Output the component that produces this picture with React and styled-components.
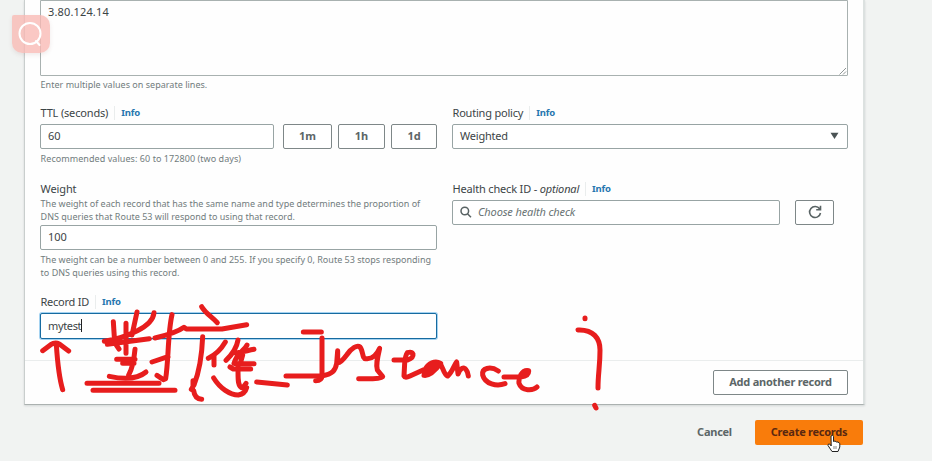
import React from "react";
import styled, { createGlobalStyle } from "styled-components";

const GlobalStyle = createGlobalStyle`
  * { box-sizing: border-box; }
  body {
    margin: 0;
    background: #f1f3f2;
    font-family: "Noto Sans", "Open Sans", sans-serif;
    color: #3c4446;
    overflow: hidden;
  }
`;

const Page = styled.div`
  position: relative;
  width: 932px;
  height: 461px;
  padding-left: 24px;
  overflow: hidden;
`;

const Panel = styled.section`
  width: 841px;
  height: 405px;
  background: #fefefe;
  border: 1px solid #c9cecd;
  border-top: 0;
  border-right: 2px solid #dce1e0;
  border-bottom-color: #abb1b0;
  box-shadow: 0 1px 2px rgba(0, 28, 36, 0.12);
  display: flex;
  flex-direction: column;
`;

const Body = styled.div`
  height: 360px;
  padding-left: 15px;
`;

const Footer = styled.div`
  flex: 1;
  border-top: 1px solid #eaeded;
  padding: 9px 15px 0 0;
  display: flex;
  justify-content: flex-end;
`;

const TextArea = styled.div`
  position: relative;
  width: 808px;
  height: 76px;
  border: 1px solid #a8b1b0;
  border-radius: 0 0 1px 1px;
  padding: 2px 7px;
  font-size: 11px;
  line-height: 18px;
`;

const Grip = styled.svg`
  position: absolute;
  right: 0;
  bottom: 0;
`;

const Columns = styled.div`
  display: grid;
  grid-template-columns: 397px 396px;
  column-gap: 15px;
`;

const Group = styled.div`
  height: ${(p) => p.$h}px;
`;

const Spacer = styled.div`
  height: ${(p) => p.$h}px;
`;

const Text = styled.span`
  letter-spacing: ${(p) => p.$ls || 0}px;
  white-space: nowrap;
`;

const LabelRow = styled.div`
  display: flex;
  align-items: center;
  height: 16px;
  padding-left: 0.5px;
  font-size: 11px;
  line-height: 16px;
`;

const Info = styled.a`
  margin-left: 6px;
  padding-left: 6px;
  border-left: 1px solid #eaeded;
  font-size: 9.5px;
  font-weight: 700;
  line-height: 14px;
  letter-spacing: -0.2px;
  color: #2676ae;
`;

const Hint = styled.div`
  height: ${(p) => p.$h || 13}px;
  padding-left: 0.6px;
  font-size: 9px;
  line-height: 13px;
  color: #717c7d;
`;

const Field = styled.div`
  display: flex;
  align-items: center;
  width: ${(p) => p.$w}px;
  height: ${(p) => (p.$focus ? 26 : 25)}px;
  padding: 0 7px 1px;
  border: 1px solid ${(p) => (p.$focus ? "#176ba0" : "#98a4a4")};
  border-radius: 2px;
  box-shadow: ${(p) => (p.$focus ? "0 0 0 1px #a5d3f1" : "none")};
  background: #fff;
  font-size: 11px;
  line-height: 16px;
`;

const Caret = styled.i`
  width: 1px;
  height: 13px;
  background: #222;
`;

const Placeholder = styled(Text)`
  margin-left: 6px;
  font-style: italic;
  color: #687374;
`;

const Arrow = styled.svg`
  margin-left: auto;
  margin-right: 1px;
`;

const Row = styled.div`
  display: flex;
  gap: ${(p) => p.$gap}px;
`;

const ButtonSet = styled.div`
  display: flex;
  gap: 6px;
  margin-left: 3px;
`;

const Button = styled.button`
  display: flex;
  align-items: center;
  justify-content: center;
  width: ${(p) => p.$w}px;
  height: 25px;
  padding: 0 0 1px;
  font: 700 11px/16px "Noto Sans", sans-serif;
  border: 1px solid ${(p) => (p.$kind ? "transparent" : "#7e8788")};
  border-radius: 2px;
  color: ${(p) => (p.$kind === "primary" ? "#5a2810" : "#5c6667")};
  background: ${(p) =>
    p.$kind === "primary" ? "#f97c0b" : p.$kind === "link" ? "transparent" : "#fff"};
`;

const Actions = styled.div`
  display: flex;
  justify-content: flex-end;
  gap: 5px;
  width: 839px;
  margin-top: 15px;
`;

const SearchBadge = styled.div`
  position: absolute;
  left: 12px;
  top: 15px;
  width: 38px;
  height: 38px;
  border-radius: 2px 10px 10px 10px;
  background: rgba(249, 184, 180, 0.78);
  box-shadow: 0 2px 4px rgba(120, 60, 60, 0.1);
`;

const Ink = styled.svg`
  position: absolute;
  left: 0;
  top: 300px;
  pointer-events: none;
`;

const Pointer = styled.svg`
  position: absolute;
  left: 827px;
  top: 434px;
`;

const Handwriting = () => (
  <Ink width="640" height="120" viewBox="0 0 1920 360" fill="none" stroke="#e71d1d" strokeWidth="15" strokeLinecap="round" strokeLinejoin="round">
    <g transform="translate(60 0)">
      <path d="M68 152L92 134Q105 126 118 132L146 153M109 134C112 180 116 230 128 269" />
      <path d="M280 65L284 128L297 147M318 70V160M351 36L336 105M402 38C400 58 380 78 352 92C330 103 290 118 253 124M262 133L388 116" />
      <path d="M290 178H345M345 148C342 180 338 205 326 225M308 190H342M268 229C310 238 352 238 378 216" />
      <path d="M405 114C440 106 470 98 492 82L499 87H606L680 74M456 44C443 100 446 180 437 236L430 239L411 226M396 186L444 170" />
      <path d="M201 250H417M219 271H465" />
      <path d="M545 20C555 38 575 50 592 68M548 110C546 160 540 210 522 255M519 242L519 260L514 268L521 272C523 288 532 297 545 298" />
      <path d="M616 126C605 145 585 165 565 175M582 165V195M654 120C650 145 635 165 618 181M681 135C675 150 650 160 642 190M645 158C665 158 680 152 702 148M650 191H702M630 201L640 207H692M668 165L661 190M654 198C655 225 650 262 668 264L678 250" />
      <path d="M581 234C600 265 630 285 655 285Q675 282 680 263" />
    </g>
    <g transform="translate(540 0)">
      <path d="M230 246L322 255M370 96H424M426 114V225Q426 242 407 242" />
      <path d="M318 228H425C458 222 466 212 470 190L473 152V188Q480 192 500 165C515 143 532 134 540 141C550 152 546 178 558 176C575 178 590 165 599 145C592 175 587 195 592 210L608 230Q600 238 536 236" />
    </g>
    <g transform="translate(1140 0)">
      <path d="M42 180H82Q101 174 99 162Q95 154 82 158Q76 166 74 190L72 228Q75 235 90 228L136 207C145 190 165 180 182 190C165 213 145 228 132 226C135 206 160 196 178 188C190 200 190 224 203 228C218 215 222 195 230 186L234 222C240 206 252 198 258 209Q264 216 265 228" />
      <path d="M355 213C330 197 305 205 308 225C315 252 350 260 375 251" />
      <path d="M372 231H422Q447 228 446 212C425 208 415 235 417 250C425 275 460 272 471 261" />
      <path d="M615 54V56M594 90C640 88 660 115 660 150C660 200 654 220 654 264M644 316L648 324" />
    </g>
  </Ink>
);

export default function App() {
  return (
    <Page>
      <GlobalStyle />
      <Panel>
        <Body>
          <TextArea>
            <Text $ls={0.15}>3.80.124.14</Text>
            <Grip width="8" height="8" viewBox="0 0 8 8" stroke="#909696">
              <path d="M0.5 7.5L7 1M4 7.5L7 4.5" />
            </Grip>
          </TextArea>
          <Spacer $h={2} />
          <Hint $h={27}><Text $ls={0.02}>Enter multiple values on separate lines.</Text></Hint>
          <Columns>
            <Group $h={76}>
              <LabelRow><Text $ls={-0.17}>TTL (seconds)</Text><Info>Info</Info></LabelRow>
              <Spacer $h={3} />
              <Row $gap={6}>
                <Field $w={234}><Text>60</Text></Field>
                <ButtonSet>
                  <Button $w={49}>1m</Button>
                  <Button $w={47}>1h</Button>
                  <Button $w={46}>1d</Button>
                </ButtonSet>
              </Row>
              <Spacer $h={3} />
              <Hint><Text $ls={0.06}>Recommended values: 60 to 172800 (two days)</Text></Hint>
            </Group>
            <Group $h={76}>
              <LabelRow><Text $ls={-0.2}>Routing policy</Text><Info>Info</Info></LabelRow>
              <Spacer $h={3} />
              <Field $w={396}>
                <Text $ls={-0.22}>Weighted</Text>
                <Arrow width="9" height="8" viewBox="0 0 9 8"><path d="M0.5 0.8H8.5L4.5 7Z" fill="#4a5354" /></Arrow>
              </Field>
            </Group>
            <Group $h={113}>
              <LabelRow><Text $ls={-0.1}>Weight</Text></LabelRow>
              <Hint><Text>The weight of each record that has the same name and type determines the proportion of</Text></Hint>
              <Hint $h={15}><Text $ls={0.01}>DNS queries that Route 53 will respond to using that record.</Text></Hint>
              <Field $w={397}><Text>100</Text></Field>
              <Spacer $h={3} />
              <Hint><Text $ls={0.01}>The weight can be a number between 0 and 255. If you specify 0, Route 53 stops responding</Text></Hint>
              <Hint><Text>to DNS queries using this record.</Text></Hint>
            </Group>
            <Group $h={113}>
              <LabelRow><Text $ls={-0.17}>Health check ID - <em>optional</em></Text><Info>Info</Info></LabelRow>
              <Spacer $h={3} />
              <Row $gap={15}>
                <Field $w={328}>
                  <svg width="12" height="12" viewBox="0 0 12 12" fill="none" stroke="#596364" strokeWidth="1.5"><circle cx="4.8" cy="5" r="3.8" /><path d="M7.5 7.7L11 11.2" /></svg>
                  <Placeholder $ls={-0.12}>Choose health check</Placeholder>
                </Field>
                <Button $w={39} aria-label="Refresh">
                  <svg width="14" height="14" viewBox="0 0 14 14" fill="none" stroke="#596364" strokeWidth="1.6"><path d="M11.6 3.8A5.5 5.5 0 1 0 12.5 8M12.5 .8V4.8H8.2" /></svg>
                </Button>
              </Row>
            </Group>
          </Columns>
          <LabelRow><Text $ls={-0.25}>Record ID</Text><Info>Info</Info></LabelRow>
          <Spacer $h={3} />
          <Field $w={397} $focus><Text $ls={-0.35}>mytest</Text><Caret /></Field>
        </Body>
        <Footer><Button $w={135}><Text $ls={-0.23}>Add another record</Text></Button></Footer>
      </Panel>
      <Actions>
        <Button $kind="link" $w={71}><Text $ls={-0.25}>Cancel</Text></Button>
        <Button $kind="primary" $w={108}><Text $ls={-0.27}>Create records</Text></Button>
      </Actions>
      <SearchBadge>
        <svg width="38" height="38" viewBox="0 0 38 38" fill="none" stroke="#fff" strokeWidth="2" strokeLinecap="round"><circle cx="18" cy="18.5" r="10.5" /><path d="M24 26L27.5 30" /></svg>
      </SearchBadge>
      <Handwriting />
      <Pointer width="14" height="19" viewBox="0 0 14 19">
        <path d="M4 2Q5.5 .5 6.5 2.5V7.5L8 7L9.5 8L11 8L12.8 9.5V13L11 17.5H5L1 11.5Q.8 9.5 2.7 10L4.2 12Z" fill="#fff" stroke="#222" />
        <path d="M7 12V15M9 12V15" stroke="#555" strokeWidth=".7" />
      </Pointer>
    </Page>
  );
}
